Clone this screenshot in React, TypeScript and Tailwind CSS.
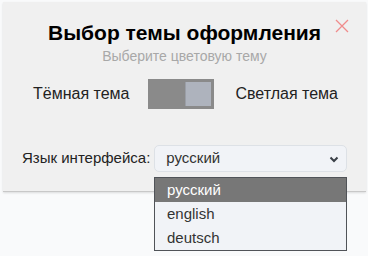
import React from "react";

export default function App() {
  const font = { fontFamily: '"Liberation Sans", Arial, sans-serif' };
  return (
    <div className="relative w-[368px] h-[256px] bg-[#f9fafb] overflow-hidden" style={font}>
      <div className="ml-[3px] mt-[2px] w-[363px] h-[190px] bg-[#f0f0f0] border-b border-[#c8c8c8] shadow-[0_1px_2px_rgba(0,0,0,0.12)] relative flex flex-col">
        <button className="absolute right-[16px] top-[16px] w-[16px] h-[16px]">
          <svg viewBox="0 0 16 16" width="16" height="16" fill="none" stroke="#f08c8c" strokeWidth="1.3">
            <path d="M2 2L14 14M14 2L2 14" />
          </svg>
        </button>
        <div className="pt-[19px] text-center text-[21px] leading-[24px] font-bold text-black">Выбор темы оформления</div>
        <div className="mt-[2px] text-center text-[14px] leading-[18px] text-[#a8a8a8]">Выберите цветовую тему</div>
        <div className="mt-[14px] flex items-center">
          <span className="ml-[30px] text-[16px] text-[#222]">Тёмная тема</span>
          <div className="ml-[19px] w-[66px] h-[30px] bg-[#8a8a8a] flex justify-end p-[2px] border border-[#8a8a8a]">
            <div className="w-[26px] h-full bg-[#aeb3bd] border-l border-[#9a9ea6]"></div>
          </div>
          <span className="ml-[21px] text-[16px] text-[#222]">Светлая тема</span>
        </div>
        <div className="mt-[36px] flex items-center">
          <span className="ml-[19px] text-[15px] text-[#222]">Язык интерфейса:</span>
          <div className="ml-[4px] w-[193px] h-[27px] rounded-[5px] border border-[#dde1e6] bg-[#f1f3f7] flex items-center justify-between pl-[11px] pr-[7px]">
            <span className="text-[15px] text-[#333]">русский</span>
            <svg width="10" height="8" viewBox="0 0 10 8" fill="none" stroke="#3a3f47" strokeWidth="2">
              <path d="M1.5 2.5L5 6L8.5 2.5" />
            </svg>
          </div>
        </div>
      </div>
      <div className="absolute left-[154px] top-[177px] w-[193px] border border-[#505358] bg-[#f1f3f7] flex flex-col text-[15px]">
        <div className="h-[24px] bg-[#777777] text-white flex items-center pl-[12px]">русский</div>
        <div className="h-[24px] text-[#333] flex items-center pl-[12px]">english</div>
        <div className="h-[24px] text-[#333] flex items-center pl-[12px]">deutsch</div>
      </div>
    </div>
  );
}
